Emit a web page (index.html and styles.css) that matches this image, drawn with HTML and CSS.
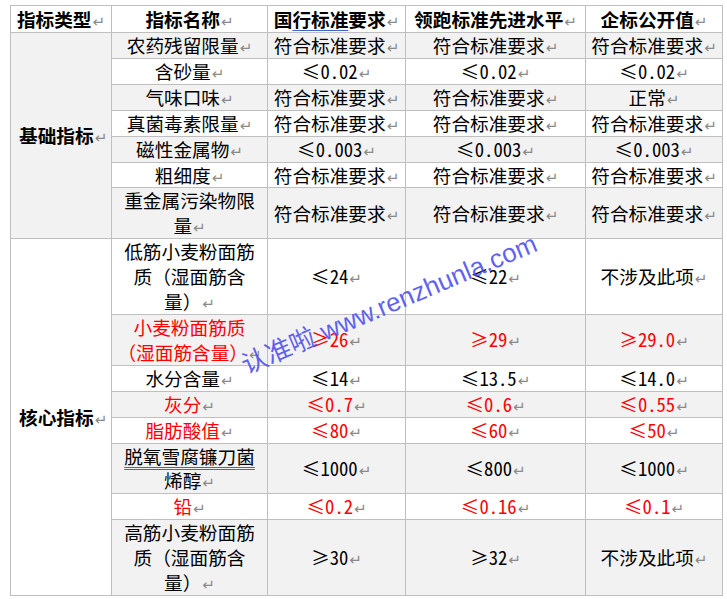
FILE: index.html
```html
<!DOCTYPE html>
<html lang="zh">
<head>
<meta charset="utf-8">
<link rel="stylesheet" href="styles.css">
</head>
<body>
<div class="page">
<table class="spec">
<colgroup><col class="c1"><col class="c2"><col class="c3"><col class="c4"><col class="c5"></colgroup>
<thead>
<tr class="head">
<th>指标类型<span class="ar">↵</span></th>
<th>指标名称<span class="ar">↵</span></th>
<th>国<span class="sp">行标准</span>要求<span class="ar">↵</span></th>
<th>领跑标准先进水平<span class="ar">↵</span></th>
<th>企标公开值<span class="ar">↵</span></th>
</tr>
</thead>
<tbody>
<tr class="g">
<td rowspan="7" class="type">基础指标<span class="ar">↵</span></td>
<td>农药残留限量<span class="ar">↵</span></td><td>符合标准要求<span class="ar">↵</span></td><td>符合标准要求<span class="ar">↵</span></td><td>符合标准要求<span class="ar">↵</span></td>
</tr>
<tr><td>含砂量<span class="ar">↵</span></td><td class="n">≤0.02<span class="ar">↵</span></td><td class="n">≤0.02<span class="ar">↵</span></td><td class="n">≤0.02<span class="ar">↵</span></td></tr>
<tr class="g"><td>气味口味<span class="ar">↵</span></td><td>符合标准要求<span class="ar">↵</span></td><td>符合标准要求<span class="ar">↵</span></td><td>正常<span class="ar">↵</span></td></tr>
<tr><td>真菌毒素限量<span class="ar">↵</span></td><td>符合标准要求<span class="ar">↵</span></td><td>符合标准要求<span class="ar">↵</span></td><td>符合标准要求<span class="ar">↵</span></td></tr>
<tr class="g"><td>磁性金属物<span class="ar">↵</span></td><td class="n">≤0.003<span class="ar">↵</span></td><td class="n">≤0.003<span class="ar">↵</span></td><td class="n">≤0.003<span class="ar">↵</span></td></tr>
<tr><td>粗细度<span class="ar">↵</span></td><td>符合标准要求<span class="ar">↵</span></td><td>符合标准要求<span class="ar">↵</span></td><td>符合标准要求<span class="ar">↵</span></td></tr>
<tr class="g"><td>重金属污染物限<br>量<span class="ar">↵</span></td><td>符合标准要求<span class="ar">↵</span></td><td>符合标准要求<span class="ar">↵</span></td><td>符合标准要求<span class="ar">↵</span></td></tr>

<tr>
<td rowspan="8" class="type core">核心指标<span class="ar">↵</span></td>
<td>低筋小麦粉面筋<br>质（湿面筋含<br>量）<span class="ar">↵</span></td><td class="n">≤24<span class="ar">↵</span></td><td class="n">≤22<span class="ar">↵</span></td><td>不涉及此项<span class="ar">↵</span></td>
</tr>
<tr class="g red"><td>小麦粉面筋质<br>（湿面筋含量）<span class="ar">↵</span></td><td class="n">≥26<span class="ar">↵</span></td><td class="n">≥29<span class="ar">↵</span></td><td class="n">≥29.0<span class="ar">↵</span></td></tr>
<tr><td>水分含量<span class="ar">↵</span></td><td class="n">≤14<span class="ar">↵</span></td><td class="n">≤13.5<span class="ar">↵</span></td><td class="n">≤14.0<span class="ar">↵</span></td></tr>
<tr class="g red"><td>灰分<span class="ar">↵</span></td><td class="n">≤0.7<span class="ar">↵</span></td><td class="n">≤0.6<span class="ar">↵</span></td><td class="n">≤0.55<span class="ar">↵</span></td></tr>
<tr class="red"><td>脂肪酸值<span class="ar">↵</span></td><td class="n">≤80<span class="ar">↵</span></td><td class="n">≤60<span class="ar">↵</span></td><td class="n">≤50<span class="ar">↵</span></td></tr>
<tr class="g"><td><span class="sp">脱氧雪腐镰刀菌</span><br>烯醇<span class="ar">↵</span></td><td class="n">≤1000<span class="ar">↵</span></td><td class="n">≤800<span class="ar">↵</span></td><td class="n">≤1000<span class="ar">↵</span></td></tr>
<tr class="red"><td>铅<span class="ar">↵</span></td><td class="n">≤0.2<span class="ar">↵</span></td><td class="n">≤0.16<span class="ar">↵</span></td><td class="n">≤0.1<span class="ar">↵</span></td></tr>
<tr class="g"><td>高筋小麦粉面筋<br>质（湿面筋含<br>量）<span class="ar">↵</span></td><td class="n">≥30<span class="ar">↵</span></td><td class="n">≥32<span class="ar">↵</span></td><td>不涉及此项<span class="ar">↵</span></td></tr>
</tbody>
</table>
<div class="mark">认准啦 www.renzhunla.com</div>
</div>
</body>
</html>
```
FILE: styles.css
```css
html, body {
  margin: 0;
  padding: 0;
  background: #ffffff;
}
.page {
  position: relative;
  padding: 5px 0 0 10px;
  width: 727px;
  height: 599px;
  box-sizing: border-box;
  overflow: hidden;
}
.spec {
  border-collapse: collapse;
  table-layout: fixed;
  width: 712px;
  font-family: "Noto Sans CJK SC", "Noto Sans", sans-serif;
  font-size: 18.67px;
  color: #000000;
}
.c1 { width: 101px; }
.c2 { width: 156px; }
.c3 { width: 138px; }
.c4 { width: 180px; }
.c5 { width: 137px; }
.spec th, .spec td {
  border: 1px solid #bfbfbf;
  padding: 0 4px;
  height: 24.9px;
  text-align: center;
  vertical-align: middle;
  line-height: 24.9px;
  font-weight: 400;
  white-space: nowrap;
  overflow: hidden;
  box-sizing: content-box;
}
.spec th {
  font-weight: 700;
  height: 26px;
  line-height: 26px;
}
.spec td.n { font-feature-settings: "hwid"; }
.spec tr.g td { background: #f2f2f2; }
.spec tr.red td { color: #ff0000; }
.spec td.type {
  font-weight: 700;
  background: #f2f2f2;
  color: #000000;
  padding-left: 8px;
}
.spec td.type.core { background: #ffffff; }
.ar {
  font-family: "DejaVu Sans", sans-serif;
  font-size: 15px;
  line-height: 0;
  font-weight: 400;
  color: #8a8a8a;
  margin-left: 1px;
}
.sp {
  text-decoration: underline double #3a64d8;
  text-underline-offset: 3px;
  text-decoration-thickness: 1px;
}
.mark {
  position: absolute;
  left: 389px;
  top: 304px;
  transform: translate(-50%, -50%) rotate(-23deg);
  font-family: "Liberation Sans", "Noto Sans CJK SC", sans-serif;
  font-size: 26px;
  line-height: 1;
  color: rgba(75, 75, 238, 0.88);
  white-space: nowrap;
  pointer-events: none;
}
```
